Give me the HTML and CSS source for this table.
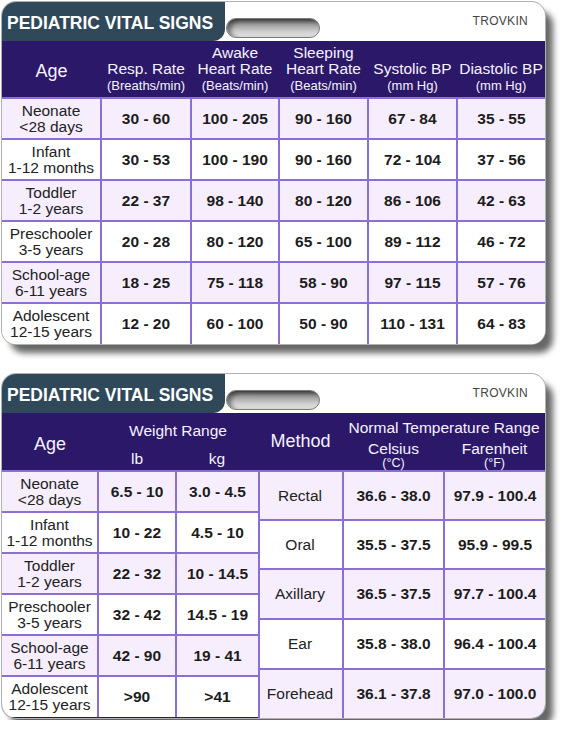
FILE: index.html
```html
<!DOCTYPE html>
<html lang="en">
<head>
    <meta charset="UTF-8">
    <meta name="viewport" content="width=device-width, initial-scale=1.0">
    <title>Pediatric Vital Signs</title>
    <link rel="stylesheet" href="styles.css">
</head>
<body>
    <div class="sheet">
        <section class="card">
            <div class="card-top">
                <h1 class="title">PEDIATRIC VITAL SIGNS</h1>
                <span class="slot"></span>
                <span class="brand">TROVKIN</span>
            </div>
            <table class="vitals">
                <colgroup>
                    <col style="width: 99px">
                    <col style="width: 90px">
                    <col style="width: 88px">
                    <col style="width: 89px">
                    <col style="width: 89px">
                    <col style="width: 88px">
                </colgroup>
                <thead>
                    <tr>
                        <th class="big">Age</th>
                        <th>Resp. Rate<small>(Breaths/min)</small></th>
                        <th>Awake<br>Heart Rate<small>(Beats/min)</small></th>
                        <th>Sleeping<br>Heart Rate<small>(Beats/min)</small></th>
                        <th>Systolic BP<small>(mm Hg)</small></th>
                        <th>Diastolic BP<small>(mm Hg)</small></th>
                    </tr>
                </thead>
                <tbody>
                    <tr class="tint">
                        <td class="age">Neonate<br>&lt;28 days</td>
                        <td>30 - 60</td><td>100 - 205</td><td>90 - 160</td><td>67 - 84</td><td>35 - 55</td>
                    </tr>
                    <tr>
                        <td class="age">Infant<br>1-12 months</td>
                        <td>30 - 53</td><td>100 - 190</td><td>90 - 160</td><td>72 - 104</td><td>37 - 56</td>
                    </tr>
                    <tr class="tint">
                        <td class="age">Toddler<br>1-2 years</td>
                        <td>22 - 37</td><td>98 - 140</td><td>80 - 120</td><td>86 - 106</td><td>42 - 63</td>
                    </tr>
                    <tr>
                        <td class="age">Preschooler<br>3-5 years</td>
                        <td>20 - 28</td><td>80 - 120</td><td>65 - 100</td><td>89 - 112</td><td>46 - 72</td>
                    </tr>
                    <tr class="tint">
                        <td class="age">School-age<br>6-11 years</td>
                        <td>18 - 25</td><td>75 - 118</td><td>58 - 90</td><td>97 - 115</td><td>57 - 76</td>
                    </tr>
                    <tr>
                        <td class="age">Adolescent<br>12-15 years</td>
                        <td>12 - 20</td><td>60 - 100</td><td>50 - 90</td><td>110 - 131</td><td>64 - 83</td>
                    </tr>
                </tbody>
            </table>
        </section>

        <section class="card">
            <div class="card-top">
                <h1 class="title">PEDIATRIC VITAL SIGNS</h1>
                <span class="slot"></span>
                <span class="brand">TROVKIN</span>
            </div>
            <div class="split">
                <table class="weights">
                    <colgroup>
                        <col style="width: 96px">
                        <col style="width: 78px">
                        <col style="width: 82px">
                    </colgroup>
                    <thead>
                        <tr class="head-top">
                            <th class="big" rowspan="2">Age</th>
                            <th colspan="2">Weight Range</th>
                        </tr>
                        <tr class="head-sub">
                            <th>lb</th>
                            <th>kg</th>
                        </tr>
                    </thead>
                    <tbody>
                        <tr class="tint"><td class="age">Neonate<br>&lt;28 days</td><td>6.5 - 10</td><td>3.0 - 4.5</td></tr>
                        <tr><td class="age">Infant<br>1-12 months</td><td>10 - 22</td><td>4.5 - 10</td></tr>
                        <tr class="tint"><td class="age">Toddler<br>1-2 years</td><td>22 - 32</td><td>10 - 14.5</td></tr>
                        <tr><td class="age">Preschooler<br>3-5 years</td><td>32 - 42</td><td>14.5 - 19</td></tr>
                        <tr class="tint"><td class="age">School-age<br>6-11 years</td><td>42 - 90</td><td>19 - 41</td></tr>
                        <tr><td class="age">Adolescent<br>12-15 years</td><td>&gt;90</td><td>&gt;41</td></tr>
                    </tbody>
                </table>
                <table class="temps">
                    <colgroup>
                        <col style="width: 85px">
                        <col style="width: 101px">
                        <col style="width: 101px">
                    </colgroup>
                    <thead>
                        <tr class="head-top">
                            <th class="big" rowspan="2">Method</th>
                            <th colspan="2">Normal Temperature Range</th>
                        </tr>
                        <tr class="head-sub">
                            <th>Celsius<small>(°C)</small></th>
                            <th>Farenheit<small>(°F)</small></th>
                        </tr>
                    </thead>
                    <tbody>
                        <tr class="tint"><td class="age">Rectal</td><td>36.6 - 38.0</td><td>97.9 - 100.4</td></tr>
                        <tr><td class="age">Oral</td><td>35.5 - 37.5</td><td>95.9 - 99.5</td></tr>
                        <tr class="tint"><td class="age">Axillary</td><td>36.5 - 37.5</td><td>97.7 - 100.4</td></tr>
                        <tr><td class="age">Ear</td><td>35.8 - 38.0</td><td>96.4 - 100.4</td></tr>
                        <tr class="tint"><td class="age">Forehead</td><td>36.1 - 37.8</td><td>97.0 - 100.0</td></tr>
                    </tbody>
                </table>
            </div>
        </section>
    </div>
</body>
</html>
```

FILE: styles.css
```css
* {
    margin: 0;
    padding: 0;
    box-sizing: border-box;
}

body {
    font-family: "Liberation Sans", Arial, sans-serif;
    background-color: #fff;
    padding: 2px;
}

.sheet {
    width: 543px;
    display: flex;
    flex-direction: column;
    gap: 30px;
}

.card {
    background-color: #fff;
    border-radius: 14px;
    overflow: hidden;
    box-shadow: 0 0 0 1px #b0b0b0, 8px 9px 6px rgba(0, 0, 0, 0.6);
}

.card-top {
    height: 39px;
    display: flex;
    align-items: flex-start;
}

.title {
    width: 223px;
    height: 39px;
    padding: 11px 0 0 5px;
    font-size: 17.5px;
    line-height: 20px;
    font-weight: 700;
    color: #fff;
    background-color: #30495a;
    border-bottom-right-radius: 12px;
    white-space: nowrap;
}

.slot {
    width: 94px;
    height: 20px;
    margin: 16px 0 0 1px;
    border-radius: 10px;
    border: 1px solid #7a7a7a;
    background: linear-gradient(180deg, #5e5e5e 0%, #9c9c9c 30%, #cfcfcf 70%, #e4e4e4 100%);
    box-shadow: inset 4px 2px 4px rgba(0, 0, 0, 0.4);
}

.brand {
    margin: 12px 17px 0 auto;
    font-size: 12px;
    color: #444;
    letter-spacing: 0.3px;
}

table {
    border-collapse: collapse;
    table-layout: fixed;
}

.vitals {
    width: 100%;
}

th {
    background-color: #2b1869;
    color: #f6f2ff;
    font-weight: 400;
    font-size: 15.5px;
    line-height: 16px;
    vertical-align: bottom;
    padding: 0 0 2px;
    white-space: nowrap;
}

th small {
    display: block;
    font-size: 13px;
    line-height: 18px;
}

th.big {
    font-size: 18px;
    vertical-align: middle;
    padding: 4px 0 0;
}

.vitals thead tr {
    height: 57px;
}

td {
    height: 41px;
    border: 2px solid #8c6fd6;
    background-color: #fff;
    text-align: center;
    font-size: 15.5px;
    font-weight: 700;
    color: #1c1c1c;
    line-height: 16px;
}

td.age {
    font-weight: 400;
    color: #222;
}

tr td:first-child {
    border-left: none;
}

tr td:last-child {
    border-right: none;
}

tbody tr:last-child td {
    border-bottom: none;
}

tr.tint td {
    background-color: #f6eefd;
}

.split {
    display: flex;
    align-items: flex-start;
    background-color: #2b1869;
}

.weights {
    width: 256px;
    flex: none;
}

.temps {
    width: 287px;
    flex: none;
}

.temps td:first-child {
    box-shadow: inset 2px 0 0 #8c6fd6;
}

.head-top {
    height: 28px;
}

.head-sub {
    height: 30px;
}

.weights .head-sub th {
    padding-bottom: 3px;
}

.temps .head-top th {
    padding-bottom: 5px;
}

.temps .head-sub th {
    line-height: 15px;
    padding-bottom: 0;
}

.temps .head-sub small {
    font-size: 12.5px;
    line-height: 14px;
}

.temps td {
    height: 49px;
}

.temps tbody tr:nth-child(3) td,
.temps tbody tr:nth-child(4) td {
    height: 50px;
}

.temps tbody tr:last-child td {
    height: 49px;
}
```
